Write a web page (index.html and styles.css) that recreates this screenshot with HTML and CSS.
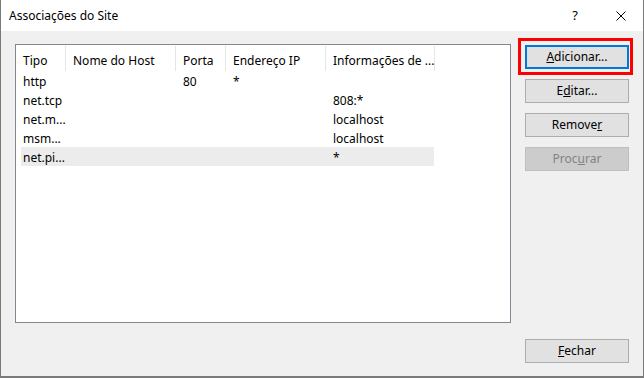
FILE: index.html
```html
<!DOCTYPE html>
<html lang="pt">
<head>
    <meta charset="utf-8">
    <title>Associações do Site</title>
    <link rel="stylesheet" href="styles.css">
</head>
<body>
    <div class="window">
        <div class="titlebar">
            <span class="title">Associações do Site</span>
            <span class="caption help">?</span>
            <span class="caption close">
                <svg width="10" height="10" viewBox="0 0 10 10"><path d="M0.5 0.5 L9.5 9.5 M9.5 0.5 L0.5 9.5" stroke="#000" stroke-width="1" fill="none"/></svg>
            </span>
        </div>

        <div class="content">
            <div class="listview">
                <div class="header">
                    <div class="col c1">Tipo</div>
                    <div class="col c2">Nome do Host</div>
                    <div class="col c3">Porta</div>
                    <div class="col c4">Endereço IP</div>
                    <div class="col c5">Informações de ...</div>
                </div>
                <div class="row">
                    <div class="cell c1">http</div>
                    <div class="cell c2"></div>
                    <div class="cell c3">80</div>
                    <div class="cell c4">*</div>
                    <div class="cell c5"></div>
                </div>
                <div class="row">
                    <div class="cell c1">net.tcp</div>
                    <div class="cell c2"></div>
                    <div class="cell c3"></div>
                    <div class="cell c4"></div>
                    <div class="cell c5">808:*</div>
                </div>
                <div class="row">
                    <div class="cell c1">net.m...</div>
                    <div class="cell c2"></div>
                    <div class="cell c3"></div>
                    <div class="cell c4"></div>
                    <div class="cell c5">localhost</div>
                </div>
                <div class="row">
                    <div class="cell c1">msm...</div>
                    <div class="cell c2"></div>
                    <div class="cell c3"></div>
                    <div class="cell c4"></div>
                    <div class="cell c5">localhost</div>
                </div>
                <div class="row selected">
                    <div class="cell c1">net.pi...</div>
                    <div class="cell c2"></div>
                    <div class="cell c3"></div>
                    <div class="cell c4"></div>
                    <div class="cell c5">*</div>
                </div>
            </div>

            <div class="buttons">
                <button class="btn default marked"><u>A</u>dicionar...</button>
                <button class="btn">E<u>d</u>itar...</button>
                <button class="btn">Remove<u>r</u></button>
                <button class="btn" disabled>Proc<u>u</u>rar</button>
                <button class="btn close-btn"><u>F</u>echar</button>
            </div>
        </div>
    </div>
</body>
</html>
```

FILE: styles.css
```css
html, body { margin: 0; padding: 0; }
body { width: 644px; height: 378px; background-color: #fff; font-family: "Noto Sans", "Open Sans", sans-serif; font-size: 12px; color: #000; overflow: hidden; }

.window { box-sizing: border-box; width: 644px; height: 378px; border: solid 1px #7a7a7a; border-top: none; border-bottom-width: 2px; display: flex; flex-direction: column; background-color: #f0f0f0; }

.titlebar { height: 31px; background-color: #fff; display: flex; align-items: center; flex-shrink: 0; }
.title { flex: 1; padding-left: 8px; padding-bottom: 1px; }
.caption { width: 46px; height: 31px; display: flex; align-items: center; justify-content: center; }
.help { font-size: 13px; padding-bottom: 2px; padding-right: 2px; box-sizing: border-box; }
.close { width: 44px; }

.content { flex: 1; display: flex; padding: 13px 13px 13px 14px; }

.listview { box-sizing: border-box; width: 496px; height: 279px; border: solid 1px #828790; background-color: #fff; }

.header { display: flex; height: 26px; }
.header .col { box-sizing: border-box; padding: 2px 0 0 7px; line-height: 26px; white-space: nowrap; overflow: hidden; border-right: solid 1px #e5e5e5; margin: 1px 0 0 0; height: 25px; }
.header .c1 { width: 50px; }
.header .c2 { width: 110px; }
.header .c3 { width: 50px; }
.header .c4 { width: 100px; }
.header .c5 { width: 109px; }

.row { display: flex; height: 19px; margin-left: 5px; width: 413px; line-height: 19px; }
.row.selected { background-color: #ececec; }
.cell { box-sizing: border-box; white-space: nowrap; overflow: hidden; padding-top: 1px; }
.row .c1 { width: 45px; padding-left: 2px; }
.row .c2 { width: 110px; }
.row .c3 { width: 50px; padding-left: 7px; }
.row .c4 { width: 100px; padding-left: 7px; }
.row .c5 { width: 108px; padding-left: 7px; }

.buttons { display: flex; flex-direction: column; margin-left: 14px; padding-top: 1px; gap: 10px; }
.btn { box-sizing: border-box; width: 104px; height: 24px; padding: 0 0 1px 0; border: solid 1px #adadad; background-color: #e1e1e1; font-family: "Noto Sans", "Open Sans", sans-serif; font-size: 12px; color: #000; }
.btn.default { border: solid 2px #0078d7; }
.btn:disabled { background-color: #cccccc; border-color: #bfbfbf; color: #838383; }
.btn.close-btn { margin-top: auto; }
.marked { position: relative; }
.marked::after { content: ""; position: absolute; left: -9px; top: -9px; right: -6px; bottom: -8px; border: solid 3px #f00; }
```
